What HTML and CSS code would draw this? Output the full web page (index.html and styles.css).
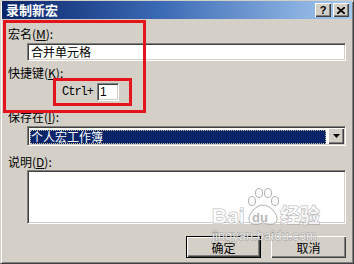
FILE: index.html
```html
<!DOCTYPE html>
<html lang="zh-CN">
<head>
    <meta charset="UTF-8">
    <title>录制新宏</title>
    <link rel="stylesheet" href="styles.css">
</head>
<body>
    <div class="window">
        <div class="titlebar">
            <span class="title">录制新宏</span>
            <div class="title-buttons">
                <span class="tbtn help">?</span>
                <span class="tbtn close">
                    <svg width="8" height="7" viewBox="0 0 8 7">
                        <path d="M0 0 L8 7 M8 0 L0 7" stroke="#000" stroke-width="1.8"/>
                    </svg>
                </span>
            </div>
        </div>

        <div class="body">
            <label class="lbl lbl-first">宏名(<u>M</u>):</label>
            <div class="field edit">合并单元格</div>

            <label class="lbl lbl-mid">快捷键(<u>K</u>):</label>
            <div class="shortcut">
                <span class="ctrl">Ctrl+</span>
                <div class="field key">1</div>
            </div>

            <label class="lbl lbl-gap">保存在(<u>I</u>):</label>
            <div class="field combo">
                <span class="combo-value">个人宏工作簿</span>
                <span class="combo-btn">
                    <svg width="7" height="4" viewBox="0 0 7 4"><path d="M0 0 H7 L3.5 4 Z" fill="#000"/></svg>
                </span>
            </div>

            <label class="lbl lbl-gap">说明(<u>D</u>):</label>
            <div class="field memo"></div>

            <div class="actions">
                <button class="btn btn-default">确定</button>
                <button class="btn">取消</button>
            </div>
        </div>

        <!-- annotation boxes drawn on top of the dialog -->
        <div class="mark mark-outer"></div>
        <div class="mark mark-inner"></div>

        <svg class="watermark" width="116" height="62" viewBox="0 0 116 62">
            <text x="2" y="39" class="wm-text wm-bai">Bai</text>
            <ellipse cx="42" cy="17" rx="3.5" ry="4.5" class="wm-shape"/>
            <ellipse cx="49" cy="9" rx="3.5" ry="4.5" class="wm-shape"/>
            <ellipse cx="58" cy="9" rx="3.5" ry="4.5" class="wm-shape"/>
            <ellipse cx="65" cy="17" rx="3.5" ry="4.5" class="wm-shape"/>
            <path d="M53 21 C60 21 68 30 67 36 C66 41 60 41 53 39 C46 41 40 41 39 36 C38 30 46 21 53 21 Z" class="wm-shape"/>
            <text x="42" y="38" class="wm-du">du</text>
            <text x="70" y="39" class="wm-text wm-cn">经验</text>
            <text x="2" y="56" class="wm-text wm-url">jingyan.baidu.com</text>
        </svg>
    </div>
</body>
</html>
```

FILE: styles.css
```css
body {
    margin: 0;
    background-color: #d4d0c8;
    font-family: "Noto Sans CJK SC", sans-serif;
    font-size: 12px;
    color: #000;
}
.window {
    position: relative;
    width: 354px;
    height: 264px;
    box-sizing: border-box;
    background-color: #d4d0c8;
    border: 1px solid;
    border-color: #d4d0c8 #404040 #404040 #d4d0c8;
    box-shadow: inset 1px 1px #fff, inset -1px -1px #808080;
    overflow: hidden;
}
.titlebar {
    height: 18px;
    margin: 0 1px;
    padding: 0 3px 0 4px;
    display: flex;
    align-items: center;
    justify-content: space-between;
    background: linear-gradient(90deg, #0a246a 0%, #3a6ab4 45%, #a6caf0 100%);
}
.title {
    color: #fff;
    font-weight: bold;
    font-size: 13px;
    line-height: 18px;
}
.title-buttons {
    display: flex;
    gap: 2px;
}
.tbtn {
    width: 16px;
    height: 14px;
    box-sizing: border-box;
    display: flex;
    align-items: center;
    justify-content: center;
    background-color: #d4d0c8;
    box-shadow: inset 1px 1px #fff, inset -1px -1px #404040, inset -2px -2px #808080;
    font-family: "Liberation Sans", sans-serif;
    font-weight: bold;
    font-size: 11px;
    line-height: 14px;
}
.body {
    padding: 0 7px;
}
.lbl {
    display: block;
    line-height: 15px;
    margin-top: 7px;
}
.lbl-mid {
    margin-top: 4px;
}
.lbl-gap {
    margin-top: 8px;
}
.lbl u {
    text-decoration-thickness: 1px;
    text-underline-offset: 1px;
}
.field {
    box-sizing: border-box;
    background-color: #fff;
    border: 1px solid;
    border-color: #808080 #fff #fff #808080;
    box-shadow: inset 1px 1px #404040, inset -1px -1px #d4d0c8;
}
.edit {
    margin: 2px 0 0 19px;
    height: 18px;
    padding: 0 3px;
    line-height: 16px;
}
.shortcut {
    display: flex;
    align-items: center;
    margin: 3px 0 0 54px;
    height: 18px;
}
.ctrl {
    font-family: "Liberation Mono", monospace;
    font-size: 12px;
    letter-spacing: -1px;
    width: 35px;
}
.key {
    width: 22px;
    height: 18px;
    padding: 0 2px;
    line-height: 16px;
    font-family: "Liberation Sans", sans-serif;
}
.combo {
    margin: 2px 0 0 19px;
    height: 20px;
    padding: 2px 1px 1px 1px;
    display: flex;
    gap: 2px;
}
.combo-value {
    flex: 1;
    height: 14px;
    margin: 1px 0 0 1px;
    padding-left: 1px;
    background-color: #0a246a;
    color: #fff;
    line-height: 14px;
    outline: 1px dotted #c8c0a0;
    outline-offset: -1px;
}
.combo-btn {
    width: 16px;
    height: 16px;
    margin-top: -1px;
    box-sizing: border-box;
    display: flex;
    align-items: center;
    justify-content: center;
    background-color: #d4d0c8;
    box-shadow: inset 1px 1px #fff, inset -1px -1px #404040, inset -2px -2px #808080;
}
.memo {
    margin: 1px 0 0 19px;
    height: 54px;
}
.actions {
    display: flex;
    justify-content: flex-end;
    gap: 10px;
    margin-top: 12px;
}
.btn {
    width: 75px;
    height: 22px;
    box-sizing: border-box;
    border: none;
    padding: 0;
    background-color: #d4d0c8;
    font-family: "Noto Sans CJK SC", sans-serif;
    font-size: 12px;
    color: #000;
    box-shadow: inset 1px 1px #fff, inset -1px -1px #404040, inset -2px -2px #808080;
}
.btn-default {
    border: 1px solid #000;
}
.mark {
    position: absolute;
    box-sizing: border-box;
    border: 3px solid #e3141b;
}
.mark-outer {
    left: 2px;
    top: 19px;
    width: 143px;
    height: 93px;
}
.mark-inner {
    left: 52px;
    top: 77px;
    width: 79px;
    height: 28px;
}
.watermark {
    position: absolute;
    left: 209px;
    top: 183px;
}
.wm-text {
    fill: rgba(255, 255, 255, 0.78);
    stroke: rgba(110, 110, 110, 0.55);
    stroke-width: 1px;
    paint-order: stroke;
}
.wm-bai {
    font-family: "Liberation Sans", sans-serif;
    font-weight: bold;
    font-size: 21px;
}
.wm-cn {
    font-family: "Noto Sans CJK SC", sans-serif;
    font-weight: bold;
    font-size: 20px;
}
.wm-url {
    font-family: "Liberation Sans", sans-serif;
    font-size: 13px;
}
.wm-shape {
    fill: rgba(255, 255, 255, 0.78);
    stroke: rgba(110, 110, 110, 0.55);
    stroke-width: 1px;
}
.wm-du {
    font-family: "Liberation Sans", sans-serif;
    font-weight: bold;
    font-size: 13px;
    fill: rgba(150, 150, 150, 0.7);
}
```
